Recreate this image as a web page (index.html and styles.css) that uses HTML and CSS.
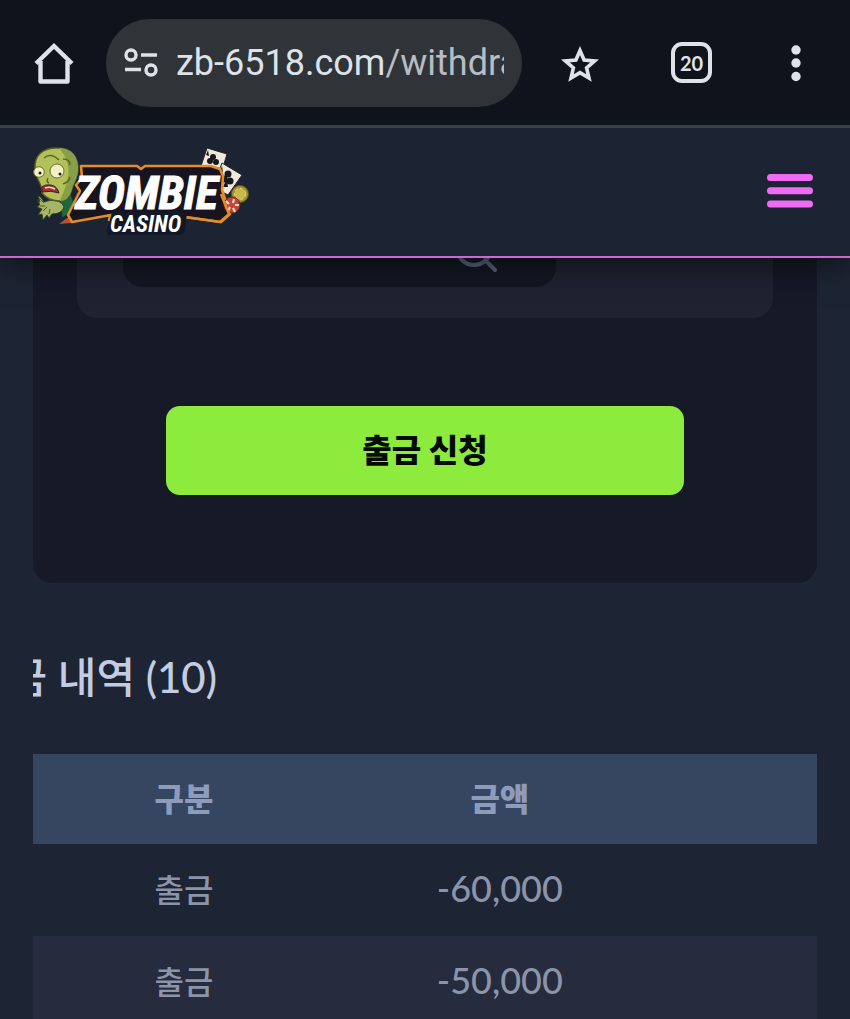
FILE: index.html
```html
<!DOCTYPE html>
<html lang="ko">
<head>
<meta charset="utf-8">
<meta name="viewport" content="width=device-width, initial-scale=1">
<title>Zombie Casino</title>
<link rel="stylesheet" href="styles.css">
</head>
<body>
<div class="toolbar">
  <button class="icon-btn" type="button" aria-label="Home">
    <svg width="40" height="42" viewBox="0 0 40 42" fill="none" stroke="#dfe2e8" stroke-width="4.4" stroke-linejoin="round"><path d="M2 21.500 20 4l18 17.500" stroke-linejoin="miter"/><path d="M6.500 19v20.500h27V19"/></svg>
  </button>
  <div class="address">
    <svg width="34" height="30" viewBox="0 0 34 30" fill="none" stroke="#dfe2e8" stroke-width="3.400"><circle cx="7" cy="7" r="5"/><path d="M17 7h16M1 21.500h16"/><circle cx="27" cy="22" r="5"/></svg>
    <div class="url">zb-6518.com<span class="path">/withdra</span></div>
  </div>
  <div class="actions">
    <button class="icon-btn" type="button" aria-label="Bookmark">
      <svg width="40" height="40" viewBox="0 0 40 40" fill="none" stroke="#dfe2e8" stroke-width="3.600"><path d="M20 7.500l4.100 9.500 10.500.9-8 6.900 2.400 10.200L20 29.600 11 35l2.400-10.200-8-6.900 10.500-.9z"/></svg>
    </button>
    <button class="tabs" type="button" aria-label="20 tabs">20</button>
    <button class="icon-btn more" type="button" aria-label="More">
      <svg width="12" height="38" viewBox="0 0 12 38" fill="#dfe2e8"><circle cx="6" cy="6" r="4.700"/><circle cx="6" cy="19" r="4.700"/><circle cx="6" cy="32.500" r="4.700"/></svg>
    </button>
  </div>
</div>

<header class="site-header">
  <a href="#" class="logo" aria-label="Zombie Casino">
    <svg width="220" height="92" viewBox="31 144 220 92">
      <g stroke="#25231f" stroke-width="1">
        <path d="M207 147l20 6-6 20-20-8z" fill="#eee9dc"/>
        <path d="M222 162l20 12-14 20-15-8z" fill="#eee9dc"/>
      </g>
      <g fill="#17181c">
        <circle cx="213" cy="156" r="3"/><circle cx="210" cy="160" r="3"/><circle cx="216" cy="161" r="3"/>
        <circle cx="228" cy="173" r="3.500"/><circle cx="224" cy="178" r="3.500"/><circle cx="230" cy="180" r="3.500"/><path d="M227 177l-4 9h5z"/>
        <path d="M206 154l2-5 1 6zM220 170l2-5 1 6z"/>
      </g>
      <circle cx="240" cy="193" r="8.500" fill="#a99532" stroke="#5e5220"/>
      <circle cx="240" cy="193" r="5.500" fill="#c7b94e" stroke="#e6d975" stroke-dasharray="3 2"/>
      <path d="M60 197l10-6 6 17-14 9z" fill="#1d6840" stroke="#153525"/>
      <path d="M38 195q3 0 6 6 6-3 14-1 5 2 6 6-2 7-12 7l-3 4-2-3-4 5-1-6-4 1 4-6-5-2q5-2 0-7l3 2z" fill="#a4b568" stroke="#35431f"/>
      <path d="M39 197l5 5m-4 3l5 0m-2 5l4-4m2 7l1-5" stroke="#4b5b2b" fill="none"/>
      <path d="M35 168C34 154 43 147 57 147c14 0 22 9 21 23-1 9-4 10-6 18-2 8-6 12-12 12-9 0-14-3-18-8 1-8-6-13-7-24z" fill="#b4c05a" stroke="#525d28" stroke-width="1.400"/>
      <path d="M59 147c13 0 20 9 19 23-1 9-4 10-6 18-2 8-6 12-12 12 3-9 6-13 7-20 4-12 0-24-8-33z" fill="#87a047"/>
      <path d="M44 157q7-6 15 2m4-1q7 0 7 6M48 177q-2 4 1 5m14 1q6-2 7-7" fill="none" stroke="#59672c" stroke-width="1.500"/>
      <circle cx="39" cy="171" r="5.300" fill="#f3f0c8" stroke="#66702c"/>
      <circle cx="57" cy="170" r="7" fill="#f3f0c8" stroke="#66702c"/>
      <circle cx="40" cy="172" r="1.500" fill="#201d19"/><circle cx="60" cy="173" r="1.500" fill="#201d19"/>
      <path d="M42 186q3-3 9-2 6 1 8 8-8-3-17-1z" fill="#a52f31" stroke="#35221c"/><path d="M45 187q5-2 10 1" stroke="#e5ded1" stroke-width="1.500" fill="none"/>
      <path d="M59 223l8-6 6 1-2 4z" fill="#b74f3c"/>
      <path d="M81 165h56l4 3 4-3h66l9 3 3 7-1 14 8 24-9 8-36-5-3 3H109l2-5-39 7-4-7 12-24-4-6 6-7z" fill="#171420" stroke="#e28d27" stroke-width="2.600" stroke-linejoin="round"/>
      <circle cx="232" cy="204" r="8" fill="#c54437" stroke="#6c2924"/>
      <path d="M226 200l3 3m5-5-1 4m6 2h-4m-7 6 2-4m5 5-2-4" stroke="#f0dfc8" stroke-width="2.200"/>
      <path d="M221 193l8 20-9 8-35-5" fill="none" stroke="#e28d27" stroke-width="2.600"/>
      <path d="M112 211h75l-2 19-4 4h-73l-1-4z" fill="#131827"/>
      <text class="logo-main" x="75" y="208">ZOMBIE</text>
      <text class="logo-sub" x="110" y="231">CASINO</text>
    </svg>
  </a>
  <button class="menu" type="button" aria-label="메뉴">
    <svg width="48" height="36" viewBox="0 0 48 36" stroke="#ef6bf3" stroke-width="7" stroke-linecap="round"><path d="M4.500 4.500h39M4.500 17.800h39M4.500 31.100h39"/></svg>
  </button>
</header>

<main>
  <form class="card">
    <div class="panel">
      <div class="field">
        <input type="text" aria-label="검색">
        <button class="search" type="button" aria-label="검색">
          <svg width="44" height="44" viewBox="0 0 44 44" fill="none" stroke="#566178" stroke-width="4" stroke-linecap="round"><circle cx="20" cy="19" r="17"/><path d="M31 31l10 10"/></svg>
        </button>
      </div>
    </div>
    <button class="submit" type="button">출금 신청</button>
  </form>

  <h2 class="title"><span>금 내역 (10)</span></h2>

  <table>
    <thead><tr><th scope="col">구분</th><th scope="col">금액</th><td></td></tr></thead>
    <tbody>
      <tr><td>출금</td><td>-60,000</td><td></td></tr>
      <tr><td>출금</td><td>-50,000</td><td></td></tr>
    </tbody>
  </table>
</main>
</body>
</html>
```
FILE: styles.css
```css
* { box-sizing: border-box; }

body {
  margin: 0;
  height: 100vh;
  overflow: hidden;
  background: #1d2433;
  color: #8b94a8;
  font-family: Lato, "Noto Sans CJK KR", sans-serif;
}

button {
  margin: 0;
  padding: 0;
  border: 0;
  background: none;
  color: inherit;
  font: inherit;
}

svg { display: block; flex: none; }

.toolbar {
  position: relative;
  z-index: 2;
  display: flex;
  align-items: center;
  gap: 32px;
  height: 128px;
  padding: 0 48px 0 34px;
  border-bottom: 3px solid #364149;
  background: #0f131b;
  color: #dfe2e8;
  font-family: Roboto, sans-serif;
}

.address {
  display: flex;
  flex: 1;
  align-items: center;
  gap: 18px;
  min-width: 0;
  height: 88px;
  padding: 0 18px;
  border-radius: 44px;
  background: linear-gradient(#2e3539, #303338);
}

.url {
  flex: 1;
  overflow: hidden;
  font-size: 36px;
  line-height: 48px;
  white-space: nowrap;
}

.path { color: #b9bdc3; }

.actions {
  display: flex;
  align-items: center;
  gap: 71px;
  width: 248px;
  padding-left: 6px;
}

.more { margin-left: auto; }

.tabs {
  width: 41px;
  height: 41px;
  border: 4px solid #dfe2e8;
  border-radius: 11px;
  font: 700 20px/32px Lato, sans-serif;
}

.site-header {
  position: relative;
  z-index: 1;
  display: flex;
  align-items: center;
  justify-content: space-between;
  height: 130px;
  padding: 0 36px 2px 31px;
  border-bottom: 2px solid #cf66d4;
  background: #1c2433;
  box-shadow: 0 4px 32px rgba(0, 0, 0, 0.6);
}

.logo-main, .logo-sub {
  font-family: "Liberation Sans Narrow", "Roboto Condensed", "Open Sans Condensed", "DejaVu Sans Condensed", sans-serif;
  font-style: italic;
  font-weight: 700;
  fill: #fff;
  stroke: #fff;
}

.logo-main { font-size: 46px; stroke-width: 1px; }
.logo-sub { font-size: 23px; stroke-width: 0; }

main { padding: 0 33px; }

.card {
  display: flex;
  flex-direction: column;
  align-items: center;
  gap: 88px;
  padding: 0 44px 88px;
  border-radius: 0 0 20px 20px;
  background: #161926;
}

.panel {
  display: flex;
  align-items: flex-end;
  align-self: stretch;
  height: 60px;
  padding: 0 46px 31px;
  overflow: hidden;
  border-radius: 0 0 20px 20px;
  background: #1f2330;
}

.field {
  display: flex;
  align-items: flex-end;
  flex: none;
  width: 433px;
  height: 88px;
  padding: 0 58px 14px 0;
  border-radius: 20px;
  background: #131722;
}

.field input {
  flex: 1;
  min-width: 0;
  height: 48px;
  padding: 0 20px;
  border: 0;
  background: none;
  color: inherit;
  font-size: 32px;
}

.submit {
  width: 518px;
  max-width: 100%;
  height: 89px;
  padding-bottom: 6px;
  border-radius: 14px;
  background: #8deb3d;
  color: #060a04;
  font-size: 32px;
  font-weight: 900;
}

.title {
  display: flex;
  justify-content: flex-end;
  width: 184px;
  margin: 64px 0 47px;
  overflow: hidden;
  color: #c3cce0;
  font-size: 42px;
  font-weight: 500;
  line-height: 60px;
  white-space: nowrap;
}

table {
  width: 100%;
  table-layout: fixed;
  border-collapse: collapse;
}

th, td {
  height: 92px;
  padding: 0 0 4px;
  font-size: 36px;
  font-weight: 500;
  text-align: center;
}

th:first-child { width: 38.5%; }
th:nth-child(2) { width: 42.1%; }

th, td:first-child { font-size: 32px; }

thead { background: #364560; }
thead th, thead td { height: 90px; }
th { color: #8c9cba; font-weight: 900; }

tbody tr:nth-child(even) { background: #262b3d; }
```
